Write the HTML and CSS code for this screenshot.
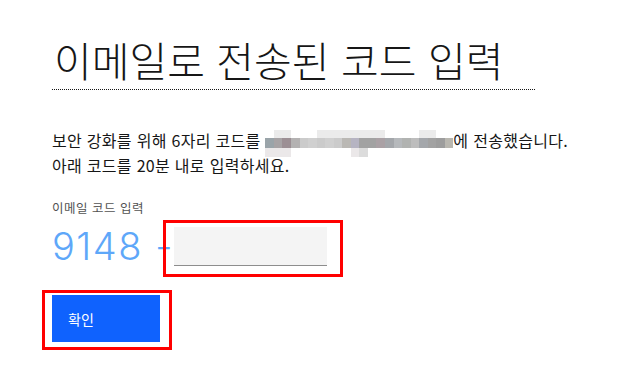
FILE: index.html
```html
<!DOCTYPE html>
<html lang="ko">
<head>
<meta charset="utf-8">
<link rel="stylesheet" href="styles.css">
</head>
<body>
<main class="page">
  <h1 class="title">이메일로 전송된 코드 입력</h1>
  <p class="desc">보안 강화를 위해 6자리 코드를 <span class="masked" aria-label="masked email"><span class="pix"><i class="c t0"></i><i class="c t1"></i><i class="c t1"></i><i class="c t0"></i><i class="c t0"></i><i class="c t0"></i><i class="c t1"></i><i class="c t1"></i><i class="c t1"></i><i class="c t1"></i><i class="c t1"></i><i class="c t1"></i><i class="c t1"></i><i class="c t1"></i><i class="c t0"></i><i class="c t0"></i><i class="c t0"></i><i class="c t0"></i><i class="c t1"></i><i class="c t1"></i><i class="c t0"></i><i class="c t0"></i><i class="c m1"></i><i class="c m2"></i><i class="c m3"></i><i class="c m4"></i><i class="c m5"></i><i class="c m6"></i><i class="c m5"></i><i class="c m6"></i><i class="c m5"></i><i class="c m7"></i><i class="c m8"></i><i class="c m9"></i><i class="c m9"></i><i class="c m10"></i><i class="c m11"></i><i class="c m12"></i><i class="c m13"></i><i class="c m14"></i><i class="c m11"></i><i class="c m9"></i><i class="c m15"></i><i class="c m16"></i><i class="c b1"></i><i class="c b1"></i><i class="c b1"></i><i class="c b0"></i><i class="c b0"></i><i class="c b0"></i><i class="c b0"></i><i class="c b0"></i><i class="c b0"></i><i class="c b0"></i><i class="c b1"></i><i class="c b2"></i><i class="c b0"></i><i class="c b0"></i><i class="c b0"></i><i class="c b0"></i><i class="c b0"></i><i class="c b0"></i><i class="c b0"></i><i class="c b0"></i><i class="c b0"></i><i class="c b0"></i></span></span>에 전송했습니다.<br>아래 코드를 20분 내로 입력하세요.</p>
  <label class="label" for="code">이메일 코드 입력</label>
  <div class="code-row">
    <span class="prefix">9148 -</span>
    <div class="field">
      <input id="code" class="input" type="text">
      <span class="highlight highlight-input"></span>
    </div>
  </div>
  <div class="actions">
    <button class="btn" type="button">확인</button>
    <span class="highlight highlight-btn"></span>
  </div>
</main>
</body>
</html>
```

FILE: styles.css
```css
* { box-sizing: border-box; }
html, body { margin: 0; padding: 0; background: #ffffff; }
body {
  font-family: "Noto Sans CJK KR", "Noto Sans", sans-serif;
  color: #161616;
}
.page {
  padding: 29px 0 0 52px;
  width: 644px;
  height: 381px;
  overflow: hidden;
}
.title {
  width: 483px;
  margin: 0;
  font-size: 41px;
  font-weight: 300;
  line-height: 60px;
  padding-left: 2px;
  white-space: nowrap;
  border-bottom: 1px dotted #161616;
}
.desc {
  margin: 38px 0 0 0;
  font-size: 16px;
  letter-spacing: 0.3px;
  line-height: 25px;
}
.masked {
  position: relative;
  display: inline-block;
  width: 188px;
  height: 10px;
  vertical-align: -1px;
}
.pix {
  position: absolute;
  left: 0;
  top: -8px;
  display: grid;
  grid-template-columns: repeat(22, 8.55px);
  grid-template-rows: 8px 10px 9px;
}
.c { display: block; }
.t0 { background: #ffffff; }
.t1 { background: #ebebeb; }
.b0 { background: transparent; }
.b1 { background: #ebe8e9; }
.b2 { background: #dcdcdc; }
.m1 { background: #9aa4a9; }
.m2 { background: #a7a3a5; }
.m3 { background: #9c8f94; }
.m4 { background: #b4b2b2; }
.m5 { background: #cbcbcb; }
.m6 { background: #d0d0d0; }
.m7 { background: #bab8b4; }
.m8 { background: #b6b4c2; }
.m9 { background: #a2a2a2; }
.m10 { background: #aaa1a5; }
.m11 { background: #a4a7ab; }
.m12 { background: #b6b9bc; }
.m13 { background: #b1b3b1; }
.m14 { background: #bdbdbd; }
.m15 { background: #9d9d9d; }
.m16 { background: #b9b7b0; }
.label {
  display: block;
  margin-top: 22px;
  font-size: 12.5px;
  letter-spacing: 0.5px;
  line-height: 16px;
  color: #525252;
}
.code-row {
  display: flex;
  align-items: center;
  margin-top: 10px;
}
.prefix {
  font-family: Inter, "Liberation Sans", sans-serif;
  font-weight: 300;
  font-size: 38px;
  letter-spacing: 1.5px;
  line-height: 40px;
  color: #5ea7f9;
  white-space: nowrap;
}
.field {
  position: relative;
  margin-left: 0;
}
.input {
  display: block;
  width: 153px;
  height: 39px;
  margin: 0;
  padding: 0 16px;
  border: 0;
  border-bottom: 1px solid #8d8d8d;
  background: #f4f4f4;
  font: inherit;
  outline: none;
}
.actions {
  position: relative;
  width: 108px;
  margin-top: 29px;
}
.btn {
  display: block;
  width: 108px;
  height: 47px;
  margin: 0;
  padding: 0 0 0 16px;
  border: 0;
  background: #0f62fe;
  color: #ffffff;
  font-family: "Noto Sans CJK KR", "Noto Sans", sans-serif;
  font-size: 14px;
  text-align: left;
}
.highlight {
  position: absolute;
  border: 3px solid #ff0000;
  pointer-events: none;
}
.highlight-input {
  left: -11px;
  top: -7px;
  width: 180px;
  height: 57px;
}
.highlight-btn {
  left: -10px;
  top: -5px;
  width: 130px;
  height: 60px;
}
```
